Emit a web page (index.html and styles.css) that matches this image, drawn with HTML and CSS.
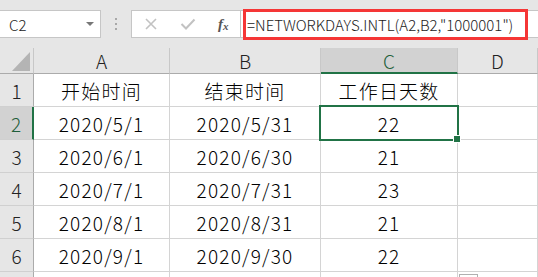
FILE: index.html
```html
<!DOCTYPE html>
<html>
<head>
<meta charset="utf-8">
<link rel="stylesheet" href="styles.css">
</head>
<body>
<div class="toolbar">
  <div class="namebox"><span class="name">C2</span><span class="caret"></span></div>
  <div class="dots"><i></i><i></i><i></i></div>
  <div class="funcbox">
    <svg class="ico" width="14" height="14" viewBox="0 0 14 14"><path d="M2 2 L12 12 M12 2 L2 12" stroke="#c2c2c2" stroke-width="1.6" fill="none"/></svg>
    <svg class="ico" width="16" height="14" viewBox="0 0 16 14"><path d="M1.5 7 L6 11.5 L14.5 2.5" stroke="#c2c2c2" stroke-width="2" fill="none"/></svg>
    <span class="fx">f<sub>x</sub></span>
  </div>
  <div class="formula"><div class="hl">=NETWORKDAYS.INTL(A2,B2,"1000001")</div></div>
</div>
<div class="sheet">
  <div class="hd corner"><span class="tri"></span></div>
  <div class="hd">A</div>
  <div class="hd">B</div>
  <div class="hd sel-col">C</div>
  <div class="hd">D</div>

  <div class="rh">1</div>
  <div class="c">开始时间</div><div class="c">结束时间</div><div class="c">工作日天数</div><div class="c"></div>

  <div class="rh sel-row">2</div>
  <div class="c">2020/5/1</div><div class="c">2020/5/31</div><div class="c active">22<span class="handle"></span></div><div class="c"></div>

  <div class="rh">3</div>
  <div class="c">2020/6/1</div><div class="c">2020/6/30</div><div class="c">21</div><div class="c"></div>

  <div class="rh">4</div>
  <div class="c">2020/7/1</div><div class="c">2020/7/31</div><div class="c">23</div><div class="c"></div>

  <div class="rh">5</div>
  <div class="c">2020/8/1</div><div class="c">2020/8/31</div><div class="c">21</div><div class="c"></div>

  <div class="rh">6</div>
  <div class="c">2020/9/1</div><div class="c">2020/9/30</div><div class="c">22</div><div class="c"></div>

  <div class="rh last"></div>
  <div class="c last"></div><div class="c last"></div><div class="c last"></div><div class="c last qa"><span class="qbox"></span></div>
</div>
</body>
</html>
```
FILE: styles.css
```css
* { box-sizing: border-box; }
html, body { margin: 0; padding: 0; }
body {
  width: 538px; height: 277px; overflow: hidden;
  background: #e6e6e6;
  font-family: "Noto Sans CJK SC", "Noto Sans", sans-serif;
  color: #000;
}
.toolbar {
  height: 48px;
  display: flex;
  align-items: flex-start;
  padding-top: 10px;
  background: #e6e6e6;
}
.namebox {
  width: 102px; height: 28px;
  margin-left: -1px;
  background: #fff;
  border: 1px solid #c6c6c6;
  display: flex; align-items: center; justify-content: space-between;
  padding: 0 6px 0 9px;
}
.name { font-size: 15px; color: #222; line-height: 1; font-weight: 300; }
.caret {
  width: 0; height: 0;
  border-left: 4px solid transparent; border-right: 4px solid transparent;
  border-top: 4px solid #777;
}
.dots {
  width: 30px; height: 28px;
  display: flex; flex-direction: column; align-items: center; justify-content: center; gap: 3px;
}
.dots i { display: block; width: 2px; height: 2px; background: #a8a8a8; }
.funcbox {
  width: 110px; height: 28px;
  background: #fff;
  border: 1px solid #c6c6c6;
  display: flex; align-items: center;
  padding-left: 12px;
}
.funcbox .ico { display: block; }
.funcbox .ico:first-child { margin-right: 22px; }
.funcbox .ico + .ico { margin-right: 22px; }
.fx {
  font-family: "Liberation Serif", serif; font-style: italic; font-weight: bold;
  font-size: 15px; color: #555; line-height: 1;
}
.fx sub { font-size: 11px; vertical-align: -1px; }
.formula {
  flex: 1; height: 28px;
  background: #fff;
  border-top: 1px solid #c6c6c6;
  border-bottom: 1px solid #c6c6c6;
  position: relative;
}
.hl {
  position: absolute; left: 2px; top: -2px;
  width: 285px; height: 31px;
  border: 3px solid #f53636;
  font-size: 15px; line-height: 25px;
  padding-left: 1px;
  color: #222;
  white-space: nowrap;
  font-weight: 300;
}
.sheet {
  display: grid;
  grid-template-columns: 34px 136px 151px 137px 80px;
  grid-template-rows: 26px repeat(6, 33px) 5px;
  background: #fff;
}
.hd {
  background: #e6e6e6;
  border-right: 1px solid #c8c8c8;
  border-bottom: 1px solid #ababab;
  display: flex; align-items: center; justify-content: center;
  font-size: 19px; color: #222;
  line-height: 1;
  font-weight: 300;
}
.hd.corner { position: relative; }
.tri {
  position: absolute; right: 3px; bottom: 2px;
  width: 0; height: 0;
  border-left: 18px solid transparent;
  border-bottom: 19px solid #b4b4b4;
}
.hd.sel-col { background: #d2d2d2; border-bottom: 2px solid #217346; color: #1f5f3a; }
.rh {
  background: #e6e6e6;
  border-right: 1px solid #ababab;
  border-bottom: 1px solid #d0d0d0;
  display: flex; align-items: center; justify-content: center;
  font-size: 19px; color: #222;
  line-height: 1;
  font-weight: 300;
}
.rh.sel-row { background: #d2d2d2; border-right: 2px solid #217346; color: #1f5f3a; }
.c {
  border-right: 1px solid #d4d4d4;
  border-bottom: 1px solid #d4d4d4;
  display: flex; align-items: center; justify-content: center;
  font-size: 19px; line-height: 1;
  letter-spacing: 1.2px;
  white-space: nowrap;
  font-weight: 300;
}
.last { border-bottom: none; }
.c.active { position: relative; }
.c.active::after {
  content: ""; position: absolute;
  left: -2px; top: -2px; right: -2px; bottom: -2px;
  border: 2px solid #217346;
}
.handle {
  position: absolute; right: -4px; bottom: -4px;
  width: 6px; height: 6px; background: #217346;
  border: 1px solid #fff; box-sizing: content-box;
  z-index: 2;
}
.qa { position: relative; overflow: visible; }
.qbox {
  position: absolute; left: 1px; top: 2px;
  width: 19px; height: 19px;
  border: 1px solid #b0b0b0; background: #fff;
}
```
